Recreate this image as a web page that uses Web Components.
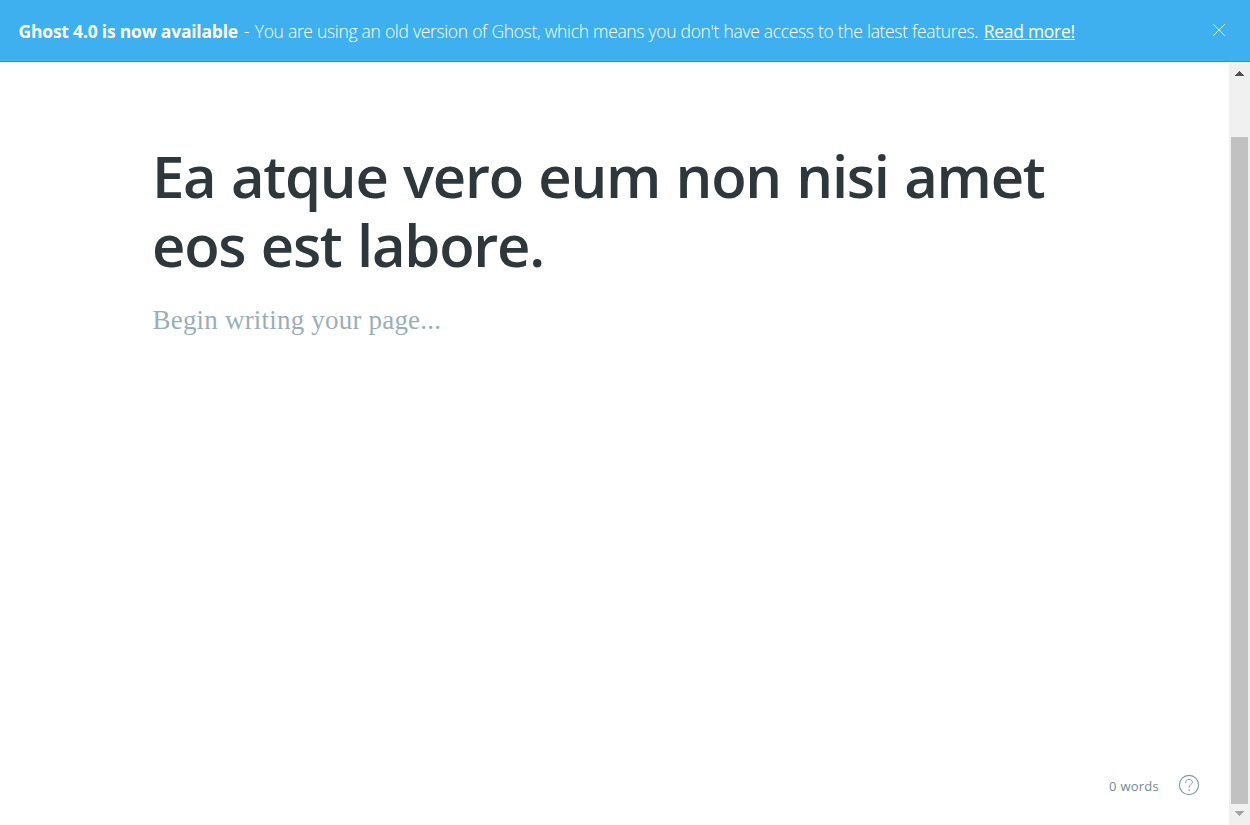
<!DOCTYPE html>
<html lang="en"><head><meta charset="utf-8"><title>Editor</title>
<style>
html,body{margin:0;height:100%;overflow:hidden;background:#fff}
body{font-family:"Open Sans","Noto Sans",sans-serif}
</style></head><body>
<ghost-app></ghost-app>
<script>
const define=(name,html)=>customElements.define(name,class extends HTMLElement{
  constructor(){super();this.attachShadow({mode:'open'}).innerHTML=html;}
});
define('upgrade-banner',`<style>
:host{display:flex;align-items:center;justify-content:space-between;box-sizing:border-box;height:62px;padding:0 24px 0 18.5px;background:#3eb0ef;border-bottom:1px solid #1c96dd;color:#fff;white-space:nowrap;font-size:17.5px;line-height:26px}
.m{display:flex;gap:5.7px}
b{font-weight:700;letter-spacing:-.21px}.t{font-weight:300;letter-spacing:-.34px;word-spacing:.2px}.t::first-letter{letter-spacing:1px}a{font-weight:400;letter-spacing:-.29px;color:#fff;text-decoration:underline;text-decoration-thickness:1px;text-underline-offset:1px}
svg{display:block;margin-bottom:1px}
</style><div class="m"><b>Ghost 4.0 is now available</b><span class="t">- You are using an old version of Ghost, which means you don't have access to the latest features.</span><a>Read more!</a></div>
<svg width="14" height="14" viewBox="0 0 14 14"><path d="M1 1 13 13M13 1 1 13" stroke="#fff" stroke-width=".8" fill="none"/></svg>`);
define('post-editor',`<style>
:host{display:flex;flex-direction:column;flex:1;padding:79px 0 0 152px;box-sizing:border-box}
h1{margin:0;font-size:58px;line-height:69px;font-weight:600;letter-spacing:-1.25px;word-spacing:1.6px;color:#2e373b}
h1 span{display:block;width:max-content}
p{margin:23px 0 0 .5px;font:27px/36px "Liberation Serif",serif;letter-spacing:.2px;color:#9baeb8;width:max-content}
</style><h1><span>Ea atque vero eum non nisi amet</span><span>eos est labore.</span></h1><p>Begin writing your page...</p>`);
define('editor-status',`<style>
:host{display:flex;align-items:center;justify-content:flex-end;gap:19px;padding:0 29px 28px 0;color:#738a94;font-size:13px;line-height:22px;letter-spacing:.25px}
svg{display:block}.w{padding-top:2px;width:max-content}
</style><div class="w">0 words</div><svg width="22" height="22" viewBox="0 0 22 22" fill="none" stroke="#8298a3" stroke-width="1.1" stroke-linecap="round" stroke-linejoin="round"><circle cx="11" cy="11" r="9.6"/><path d="M7.6 8.6C7.6 6.6 9.1 5.4 11 5.4s3.4 1.1 3.4 2.9c0 2.2-3.4 2.3-3.4 4.9" stroke-width=".95"/><circle cx="11" cy="16.1" r=".3" stroke-width=".8"/></svg>`);
define('scroll-rail',`<style>
:host{display:flex;flex-direction:column;width:21px;background:#f0f0f0}
.u,.d{display:flex;justify-content:center;height:21px;align-items:center}
.u{height:23px;margin-bottom:52px}.d{box-sizing:border-box;padding-bottom:2px}.thumb{flex:1;background:#c1c1c1;margin:0 2px}svg{display:block}
</style><div class="u"><svg width="9" height="5" shape-rendering="crispEdges"><path d="M0 5 4.5 0 9 5Z" fill="#505050"/></svg></div><div class="thumb"></div><div class="d"><svg width="9" height="5" shape-rendering="crispEdges"><path d="M0 0H9L4.5 5Z" fill="#a3a3a3"/></svg></div>`);
define('ghost-app',`<style>
:host{display:flex;flex-direction:column;height:825px}
.body{display:flex;flex:1;min-height:0}.main{display:flex;flex-direction:column;flex:1;min-width:0}
</style><upgrade-banner></upgrade-banner><div class="body"><div class="main"><post-editor></post-editor><editor-status></editor-status></div><scroll-rail></scroll-rail></div>`);
</script></body></html>
